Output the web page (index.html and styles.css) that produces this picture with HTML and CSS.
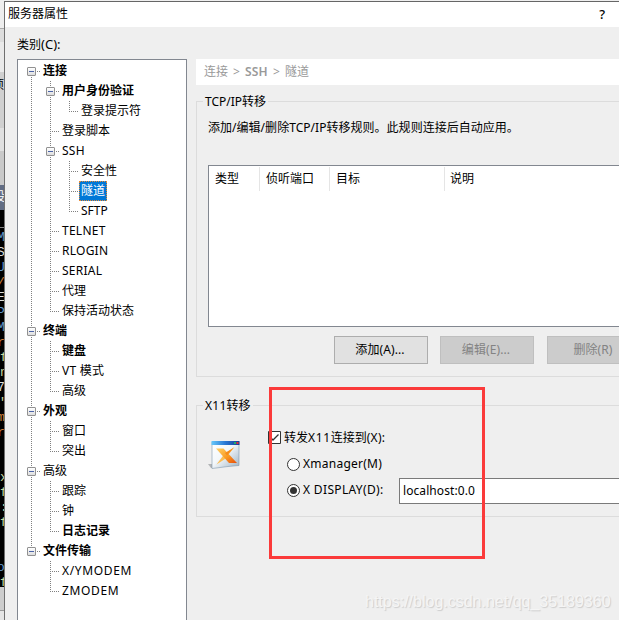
FILE: index.html
```html
<!DOCTYPE html>
<html lang="zh-CN">
<head>
<meta charset="utf-8">
<title>服务器属性</title>
<link rel="stylesheet" href="styles.css">
</head>
<body>
<div class="desktop">
  <aside class="behind">
    <div class="behind-bar"></div>
    <div class="behind-menu"></div>
    <div class="behind-tool"><span>项</span></div>
    <div class="behind-gap"></div>
    <div class="behind-tab"><span>设</span></div>
    <pre class="terminal"><b>_</b>
<i>M</i>
<b>S</b>
<i>U</i>
<em>/</em>
<b>E</b>
<i>P</i>
<i>M</i>
<em>r</em>
f
n
<b>7</b>
"
<em>m</em>
<em>r</em>


x
f
:
f


<i>o</i>
f</pre>
    <div class="behind-status"></div>
  </aside>
  <main class="dialog">
    <header class="titlebar"><span>服务器属性</span><span class="help">?</span></header>
    <div class="caption">类别<span class="lat">(C):</span></div>
    <div class="content">
      <nav class="tree">
        <ul>
          <li><div class="row bold parent"><span>连接</span></div>
            <ul>
              <li><div class="row bold parent"><span>用户身份验证</span></div>
                <ul><li><div class="row"><span>登录提示符</span></div></li></ul>
              </li>
              <li><div class="row"><span>登录脚本</span></div></li>
              <li><div class="row parent"><span class="loose">SSH</span></div>
                <ul>
                  <li><div class="row"><span>安全性</span></div></li>
                  <li><div class="row selected"><span>隧道</span></div></li>
                  <li><div class="row"><span>SFTP</span></div></li>
                </ul>
              </li>
              <li><div class="row"><span class="loose">TELNET</span></div></li>
              <li><div class="row"><span class="loose">RLOGIN</span></div></li>
              <li><div class="row"><span class="loose">SERIAL</span></div></li>
              <li><div class="row"><span>代理</span></div></li>
              <li><div class="row"><span>保持活动状态</span></div></li>
            </ul>
          </li>
          <li><div class="row bold parent"><span>终端</span></div>
            <ul>
              <li><div class="row bold"><span>键盘</span></div></li>
              <li><div class="row"><span class="loose">VT 模式</span></div></li>
              <li><div class="row"><span>高级</span></div></li>
            </ul>
          </li>
          <li><div class="row bold parent"><span>外观</span></div>
            <ul>
              <li><div class="row"><span>窗口</span></div></li>
              <li><div class="row"><span>突出</span></div></li>
            </ul>
          </li>
          <li><div class="row parent"><span>高级</span></div>
            <ul>
              <li><div class="row"><span>跟踪</span></div></li>
              <li><div class="row"><span>钟</span></div></li>
              <li><div class="row bold"><span>日志记录</span></div></li>
            </ul>
          </li>
          <li><div class="row bold parent"><span>文件传输</span></div>
            <ul>
              <li><div class="row"><span class="wide">X/YMODEM</span></div></li>
              <li><div class="row"><span class="wide">ZMODEM</span></div></li>
            </ul>
          </li>
        </ul>
      </nav>
      <section class="panel">
        <div class="crumbs"><span>连接</span><i>&gt;</i><b>SSH</b><i>&gt;</i><span>隧道</span></div>
        <section class="group tcp">
          <h2>TCP/IP转移</h2>
          <p>添加/编辑/删除TCP/IP转移规则。此规则连接后自动应用。</p>
          <div class="list">
            <div class="head"><span>类型</span><span>侦听端口</span><span>目标</span><span>说明</span></div>
          </div>
          <div class="buttons">
            <button>添加(A)...</button><button disabled>编辑(E)...</button><button disabled>删除(R)</button>
          </div>
        </section>
        <section class="group x11">
          <h2><span class="loose">X11</span>转移</h2>
          <div class="x11-body">
            <svg class="logo" width="34" height="32" viewBox="0 0 34 32">
              <defs>
                <linearGradient id="bar"><stop offset="0" stop-color="#67c8fa"/><stop offset=".5" stop-color="#2877d4"/><stop offset="1" stop-color="#173b93"/></linearGradient>
                <linearGradient id="pane" x2="1" y2="1"><stop offset="0" stop-color="#fff"/><stop offset=".45" stop-color="#f3f7fa"/><stop offset="1" stop-color="#9db2c2"/></linearGradient>
                <linearGradient id="cross" x2="1" y2="1"><stop offset="0" stop-color="#ffd166"/><stop offset=".55" stop-color="#f99a22"/><stop offset="1" stop-color="#e8500c"/></linearGradient>
              </defs>
              <path d="M0 25h4v4H3z" fill="#b2b4b6"/>
              <path d="M4 3H31V26.500L20 27.500 4 29.500z" fill="url(#pane)" stroke="#8199ad" stroke-width=".6"/>
              <path d="M3.500 2h28v4h-28z" fill="url(#bar)"/>
              <path d="M26 3h2v2h-2z" fill="#22ad69"/><path d="M28.500 3h2v2h-2z" fill="#e72c35"/>
              <path d="M26.500 8L17 20 8.500 25.500 16 15.500z" fill="#fbbd54"/>
              <path d="M8 9.500h7.500L29 24h-8z" fill="url(#cross)"/>
              <path d="M17 14l9-5.500-7 8z" fill="#f58b1b"/>
            </svg>
            <div class="options">
              <div class="opt"><svg width="13" height="13" viewBox="0 0 13 13"><path d="M.5.500h12v12H.5z" fill="#fff" stroke="#333"/><path d="M2.500 6.500L5 9l5.500-5.500" fill="none" stroke="#333" stroke-width="1.300"/></svg><span>转发<span class="wide">X11</span>连接到<span class="loose">(X):</span></span></div>
              <div class="opt sub"><svg width="13" height="13" viewBox="0 0 13 13"><circle cx="6.500" cy="6.500" r="6" fill="#fff" stroke="#333"/></svg><span class="loose">Xmanager(M)</span></div>
              <div class="opt sub"><svg width="13" height="13" viewBox="0 0 13 13"><circle cx="6.500" cy="6.500" r="6" fill="#fff" stroke="#333"/><circle cx="6.500" cy="6.500" r="3.500" fill="#333"/></svg><span class="display">X DISPLAY(D):</span><div class="field">localhost:0.0</div></div>
            </div>
          </div>
        </section>
      </section>
    </div>
  </main>
  <div class="marker"></div>
  <div class="watermark">https://blog.csdn.net/qq_35189360</div>
</div>
</body>
</html>
```
FILE: styles.css
```css
*, *::before, *::after { box-sizing: border-box; }
body { margin: 0; overflow: hidden; font: 12px/20px "Noto Sans", "Noto Sans CJK SC", sans-serif; color: #000; }
ul { list-style: none; margin: 0; padding: 0; }
.loose { letter-spacing: .25px; }
.wide { letter-spacing: .65px; }
.desktop { position: relative; display: flex; width: 619px; height: 620px; overflow: hidden; background: #efefef; }

.behind { width: 4px; flex: none; display: flex; flex-direction: column; overflow: hidden; background: #dedede; }
.behind > div { flex: none; overflow: hidden; }
.behind-bar { height: 28px; background: #eee; }
.behind-menu { height: 44px; background: #ddd; border-top: 1px solid #aaa; border-bottom: 30px solid #eaeaea; }
.behind-tool { height: 56px; background: #d0d0d0; }
.behind-tool span { display: block; margin: 3px 0 0 -8px; }
.behind-gap { height: 57px; background: linear-gradient(#e0e0e0 23px, #c9c9c9 23px); }
.behind-tab { height: 25px; background: #626d84; color: #fff; }
.behind-tab span { display: block; margin: 2px 0 0 -7px; }
.terminal { height: 377px; margin: 0; flex: none; background: #000; color: #c8d8a0; font: 13px/15px "Liberation Mono", monospace; text-indent: 0; overflow: hidden; padding-top: 5px; }
.terminal b, .terminal i, .terminal em { display: inline-block; margin-left: -3px; }
.terminal b { font-weight: 400; color: #ddd; }
.terminal i { font-style: normal; color: #6098cf; }
.terminal em { font-style: normal; color: #cf813c; }
.behind-status { height: 33px; background: linear-gradient(#cdcdcd 23px, #999 23px 24px, #e5e5e5 24px); }

.dialog { flex: 1; min-width: 0; border-left: 1px solid #707070; border-top: 1px solid #666; margin-top: 1px; }
.titlebar { height: 25px; background: #fff; padding: 2px 14px 0 3px; display: flex; justify-content: space-between; }
.help { font-size: 13px; font-weight: 500; }
.caption { height: 32px; padding: 7px 0 0 12px; }
.caption .lat { font-size: 13px; }
.content { display: flex; height: 562px; padding-left: 12px; }

.tree { width: 170px; flex: none; border: 1px solid #828790; border-bottom: 0; background: #fff; padding: 1px 0 0 9px; }
.tree li { position: relative; }
.tree li::before { content: ""; position: absolute; left: 4px; top: 0; bottom: 0; width: 1px; background: repeating-linear-gradient(#808080 0 1px, transparent 1px 2px); }
.tree li:last-child::before { bottom: auto; height: 11px; }
.tree > ul > li:first-child::before { top: 10px; }
.tree ul ul { margin-left: 19px; }
.row { position: relative; height: 20px; padding-left: 14px; line-height: 20px; white-space: nowrap; }
.row::before { content: ""; position: absolute; left: 4px; top: 10px; width: 9px; height: 1px; background: repeating-linear-gradient(90deg, #808080 0 1px, transparent 1px 2px); }
.row span { display: inline-block; height: 20px; padding: 0 2px; line-height: 19px; vertical-align: top; }
.parent::after { content: ""; position: absolute; left: 0; top: 6px; width: 9px; height: 9px; border: 1px solid #919191; border-radius: 1px; background: linear-gradient(#4b63a7, #4b63a7) 1px 3px / 5px 1px no-repeat, linear-gradient(#fff, #ddd); }
.bold { font-weight: 700; }
.selected span { color: #fff; background: #0078d7; outline: 1px dotted #e98a35; outline-offset: -1px; }

.panel { width: 450px; flex: none; margin-left: 9px; }
.crumbs { height: 26px; background: #fff; color: #999; padding: 3px 8px; display: flex; line-height: 19px; }
.crumbs i { font-style: normal; width: 17px; text-align: center; }
.crumbs b { font-weight: 600; letter-spacing: .2px; }
.group { border: 1px solid #dcdcdc; }
.group h2 { font: inherit; display: table; height: 20px; margin: -10px 0 0 6px; padding: 0 2px; background: #efefef; white-space: nowrap; }
.tcp { margin-top: 16px; height: 276px; }
.tcp p { margin: 6px 0 0 11px; letter-spacing: .03px; }
.list { margin: 27px 0 0 11px; height: 162px; border: 1px solid #828790; background: #fff; }
.head { display: flex; height: 25px; padding-top: 1px; }
.head span { border-right: 1px solid #e5e5e5; padding: 2px 0 0 6px; }
.head span:nth-child(1) { width: 51px; }
.head span:nth-child(2) { width: 70px; }
.head span:nth-child(3) { width: 115px; }
.head span:nth-child(4) { border: 0; padding-left: 5px; }
.buttons { display: flex; margin: 9px 0 0 137px; gap: 12px; }
button { width: 94px; height: 28px; flex: none; border: 1px solid #adadad; background: #e1e1e1; font: inherit; letter-spacing: .1px; color: #000; padding: 0 2px 0 0; }
button:disabled { background: #ccc; border-color: #bfbfbf; color: #838383; }
button:last-child { margin-left: 1px; }
.x11 { margin-top: 28px; height: 112px; }
.x11-body { display: flex; padding-left: 11px; }
.logo { margin-top: 23px; flex: none; }
.options { margin: 11px 0 0 26px; }
.opt { display: flex; align-items: center; height: 20px; gap: 3px; white-space: nowrap; }
.opt svg { flex: none; }
.sub { margin: 7px 0 0 19px; }
.sub + .sub { margin-top: 6px; }
.opt:first-child > span { padding-top: 1px; }
.display { width: 93px; letter-spacing: .35px; }
.field { width: 240px; height: 26px; flex: none; border: 1px solid #7a7a7a; background: #fff; padding: 2px 3px; letter-spacing: .08px; margin-top: 2px; }

.marker { position: absolute; left: 269px; top: 387px; width: 216px; height: 172px; border: 3px solid #fb3a3a; }
.watermark { position: absolute; left: 365px; top: 592px; color: #f5f5f5; font: 16px/20px "Liberation Sans", sans-serif; text-shadow: 1px 1px 1px #ccc; white-space: nowrap; }
```
